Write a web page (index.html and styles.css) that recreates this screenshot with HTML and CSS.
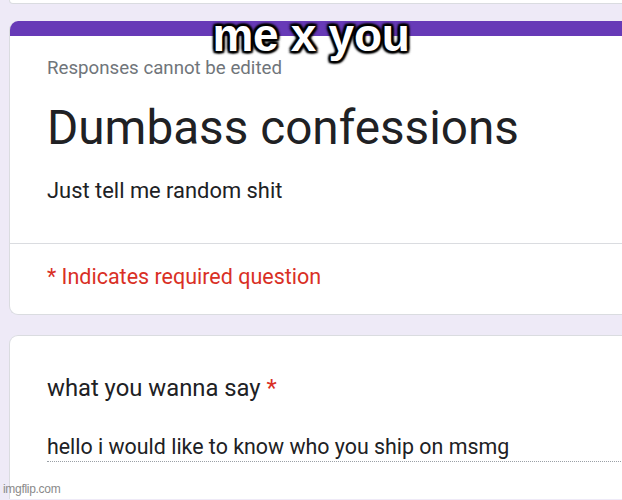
FILE: index.html
```html
<!DOCTYPE html>
<html>
<head>
<meta charset="utf-8">
<link rel="stylesheet" href="styles.css">
</head>
<body>
<div class="page">
  <div class="prev-card"></div>
  <div class="card header-card">
    <div class="accent"></div>
    <div class="header-body">
      <div class="note">Responses cannot be edited</div>
      <h1 class="title">Dumbass confessions</h1>
      <div class="desc">Just tell me random shit</div>
    </div>
    <div class="required">* Indicates required question</div>
  </div>
  <div class="card question-card">
    <div class="question">what you wanna say <span class="star">*</span></div>
    <div class="answer">hello i would like to know who you ship on msmg</div>
  </div>
</div>
<div class="caption">me x you</div>
<div class="watermark">imgflip.com</div>
</body>
</html>
```

FILE: styles.css
```css
html, body {
  margin: 0;
  padding: 0;
}
body {
  width: 622px;
  height: 500px;
  overflow: hidden;
  background: #eeeaf7;
  font-family: Roboto, "Liberation Sans", sans-serif;
  position: relative;
}
.page {
  padding-left: 9px;
  margin-right: -30px;
  display: flex;
  flex-direction: column;
}
.prev-card {
  height: 3px;
  background: #fff;
  border: 1px solid #dadce0;
  border-top: none;
  border-radius: 0 0 0 8px;
}
.card {
  background: #fff;
  border: 1px solid #dadce0;
  border-radius: 9px;
  overflow: hidden;
}
.header-card {
  margin-top: 17px;
  border: none;
  border-left: 1px solid #dadce0;
  border-bottom: 1px solid #dadce0;
}
.accent {
  height: 15px;
  background: #673ab7;
}
.header-body {
  padding: 21.6px 0 0 37px;
  height: 208px;
  border-bottom: 1px solid #dadce0;
  box-sizing: border-box;
}
.note,
.title,
.desc,
.required,
.question,
.answer {
  line-height: 1.172;
}
.note {
  font-size: 18.7px;
  color: #70757a;
}
.title {
  margin: 21px 0 0;
  font-weight: 400;
  font-size: 47.7px;
  color: #202124;
}
.desc {
  margin-top: 22px;
  font-size: 21.9px;
  color: #202124;
}
.required {
  padding: 20px 0 0 37px;
  height: 70px;
  box-sizing: border-box;
  font-size: 21.5px;
  color: #d93025;
}
.question-card {
  margin-top: 20px;
  height: 164px;
  border-bottom: none;
  border-radius: 9px 9px 0 0;
  padding: 39px 0 0 37px;
  box-sizing: border-box;
}
.question {
  font-size: 23.8px;
  color: #202124;
}
.star {
  color: #d93025;
}
.answer {
  margin-top: 31px;
  font-size: 21.4px;
  color: #202124;
  padding-bottom: 2px;
  border-bottom: 1px dotted #9aa0a6;
}
.caption {
  position: absolute;
  top: 10px;
  left: 0;
  right: 0;
  text-align: center;
  font-family: "Liberation Sans", Arial, sans-serif;
  font-weight: 700;
  font-size: 46px;
  line-height: 50px;
  color: #fff;
  letter-spacing: -0.3px;
  text-shadow:
    2px 2px 2px #000, -2px -2px 2px #000, 2px -2px 2px #000, -2px 2px 2px #000,
    0 2px 2px #000, 0 -2px 2px #000, 2px 0 2px #000, -2px 0 2px #000,
    0 0 4px #000, 0 0 4px #000;
}
.watermark {
  position: absolute;
  left: 3px;
  bottom: 4px;
  font-family: "Liberation Sans", Arial, sans-serif;
  font-size: 12px;
  color: #8a8a8a;
  letter-spacing: -0.3px;
}
```
